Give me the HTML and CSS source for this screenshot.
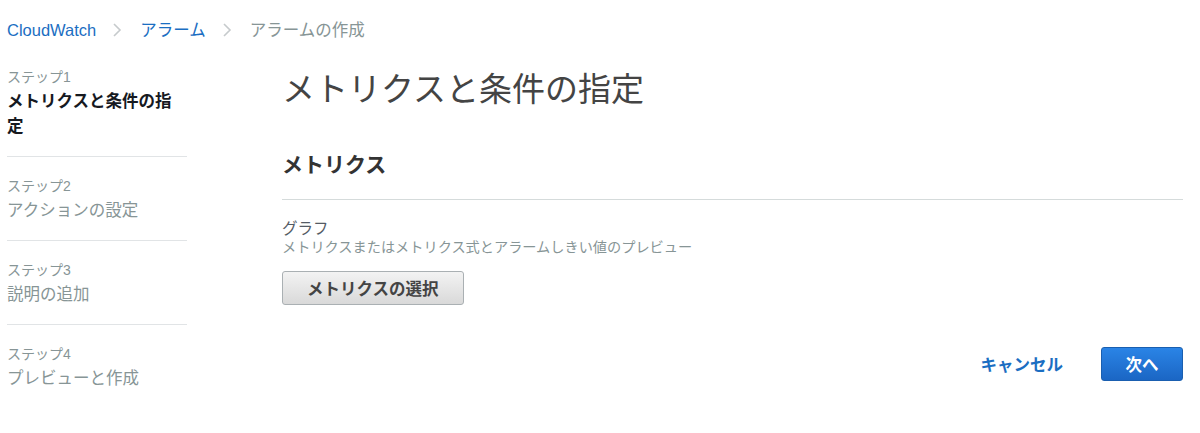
FILE: index.html
```html
<!DOCTYPE html>
<html lang="ja">
<head>
    <meta charset="UTF-8">
    <meta name="viewport" content="width=device-width, initial-scale=1.0">
    <title>アラームの作成</title>
    <link rel="stylesheet" href="styles.css">
</head>
<body>
    <nav class="breadcrumb">
        <a href="#">CloudWatch</a>
        <svg class="chevron" width="10" height="16" viewBox="0 0 10 16"><polyline points="2,2 8,8 2,14" fill="none" stroke="#c6cacc" stroke-width="1.6"/></svg>
        <a href="#">アラーム</a>
        <svg class="chevron" width="10" height="16" viewBox="0 0 10 16"><polyline points="2,2 8,8 2,14" fill="none" stroke="#c6cacc" stroke-width="1.6"/></svg>
        <span class="current">アラームの作成</span>
    </nav>

    <div class="layout">
        <ul class="steps">
            <li class="step active">
                <div class="step-num">ステップ1</div>
                <div class="step-name">メトリクスと条件の指定</div>
            </li>
            <li class="step">
                <div class="step-num">ステップ2</div>
                <div class="step-name">アクションの設定</div>
            </li>
            <li class="step">
                <div class="step-num">ステップ3</div>
                <div class="step-name">説明の追加</div>
            </li>
            <li class="step">
                <div class="step-num">ステップ4</div>
                <div class="step-name">プレビューと作成</div>
            </li>
        </ul>

        <main class="content">
            <h1>メトリクスと条件の指定</h1>
            <h2>メトリクス</h2>
            <div class="field">
                <div class="field-label">グラフ</div>
                <div class="field-desc">メトリクスまたはメトリクス式とアラームしきい値のプレビュー</div>
                <button class="btn">メトリクスの選択</button>
            </div>
            <div class="actions">
                <a href="#" class="cancel">キャンセル</a>
                <button class="btn btn-primary">次へ</button>
            </div>
        </main>
    </div>
</body>
</html>
```

FILE: styles.css
```css
body {
    margin: 0;
    font-family: 'Liberation Sans', 'Noto Sans CJK JP', sans-serif;
    color: #16191f;
    background: #fff;
}
a {
    text-decoration: none;
}
.breadcrumb {
    display: flex;
    align-items: center;
    height: 24px;
    padding: 18px 0 0 7px;
    font-size: 16.5px;
    line-height: 24px;
}
.breadcrumb a {
    color: #1b6ec2;
}
.breadcrumb .current {
    color: #879596;
}
.chevron {
    margin: 0 18px 0 16px;
}
.layout {
    display: flex;
    gap: 95px;
    padding: 25px 17px 0 7px;
}
.steps {
    list-style: none;
    margin: 0;
    padding: 0;
    width: 180px;
    flex-shrink: 0;
}
.step {
    padding: 19px 0 17px;
    border-bottom: 1px solid #e1e4e6;
}
.step:first-child {
    padding-top: 0;
}
.step:last-child {
    border-bottom: none;
}
.step-num {
    font-size: 14px;
    line-height: 20px;
    color: #879596;
    margin-bottom: 2px;
}
.step-name {
    font-size: 16.5px;
    line-height: 25px;
    color: #879596;
    max-width: 172px;
}
.step.active .step-name {
    color: #16191f;
    font-weight: bold;
}
.content {
    flex: 1;
    padding-top: 3px;
}
h1 {
    margin: 0;
    font-size: 33px;
    line-height: 40px;
    font-weight: normal;
    color: #444;
}
h2 {
    margin: 41px 0 0;
    padding-bottom: 20px;
    border-bottom: 1px solid #d5dbdb;
    font-size: 21px;
    line-height: 28px;
    font-weight: bold;
    color: #333;
}
.field {
    padding-top: 19px;
}
.field-label {
    font-size: 15.5px;
    line-height: 20px;
    color: #545b64;
}
.field-desc {
    font-size: 14.2px;
    line-height: 16px;
    color: #879596;
}
.btn {
    font-family: inherit;
    font-size: 16.5px;
    font-weight: bold;
    height: 34px;
    padding: 0 24px;
    border: 1px solid #aab0b3;
    border-radius: 3px;
    background: linear-gradient(#f3f3f3, #d9d9d9);
    color: #444;
    cursor: pointer;
}
.field .btn {
    margin-top: 16px;
}
.actions {
    display: flex;
    justify-content: flex-end;
    align-items: center;
    gap: 38px;
    margin-top: 42px;
}
.cancel {
    color: #1b6ec2;
    font-weight: bold;
    font-size: 16.5px;
}
.btn-primary {
    width: 82px;
    padding: 0;
    color: #fff;
    border-color: #1a5fb0;
    background: linear-gradient(#2a84e6, #1b66c4);
}
```
